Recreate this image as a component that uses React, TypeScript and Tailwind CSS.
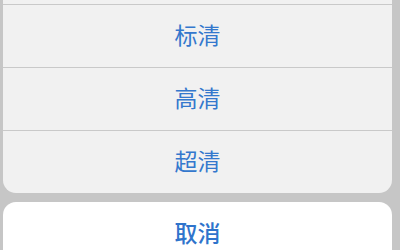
const options = ['标清', '高清', '超清'];

const font = { fontFamily: '"PingFang SC", "Noto Sans CJK SC", sans-serif' };

export default function App() {
  return (
    <div
      className="w-[400px] h-[250px] overflow-hidden bg-[#c6c6c6] pl-[3px] pr-[8px] flex flex-col"
      style={font}
    >
      {/* 选项组（顶部被裁切） */}
      <div className="bg-[#f1f1f1] rounded-b-[13px] flex flex-col shrink-0">
        <div className="h-[4px]" />
        {options.map((label) => (
          <button
            key={label}
            className="h-[63px] border-t border-[#c9c9c9] flex items-center justify-center pb-[4px] text-[23px] leading-none text-[#3478cd]"
          >
            {label}
          </button>
        ))}
      </div>

      {/* 取消按钮 */}
      <div className="mt-[9px] bg-white rounded-t-[13px] h-[70px] shrink-0 flex items-start justify-center pt-[19px]">
        <button className="text-[23px] leading-none font-medium text-[#2f74cc]">取消</button>
      </div>
    </div>
  );
}
